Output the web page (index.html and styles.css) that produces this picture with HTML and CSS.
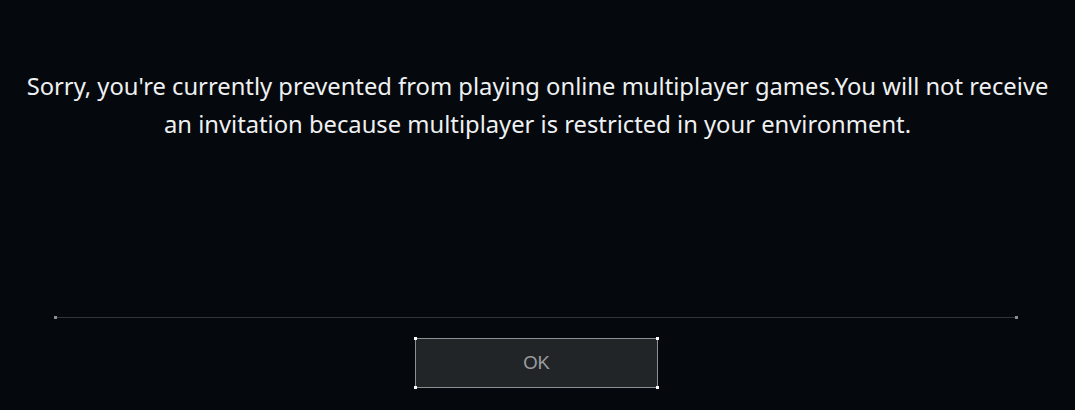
FILE: index.html
```html
<!DOCTYPE html>
<html>
<head>
<meta charset="utf-8">
<link rel="stylesheet" href="styles.css">
</head>
<body>
<div class="dialog">
  <p class="message">Sorry, you're currently prevented from playing online multiplayer games.You will not receive an invitation because multiplayer is restricted in your environment.</p>
  <div class="divider"><span class="cap left"></span><span class="cap right"></span></div>
  <div class="actions">
    <button class="btn"><span class="dot tl"></span><span class="dot tr"></span><span class="dot bl"></span><span class="dot br"></span>OK</button>
  </div>
</div>
</body>
</html>
```
FILE: styles.css
```css
html, body {
  margin: 0;
  padding: 0;
  background: #05080c;
  width: 1075px;
  height: 410px;
  overflow: hidden;
}
.dialog {
  display: flex;
  flex-direction: column;
  align-items: center;
  padding-top: 67px;
}
.message {
  margin: 0;
  width: 1032px;
  text-align: center;
  font-family: "Noto Sans", sans-serif;
  font-size: 23.75px;
  line-height: 38px;
  color: #eef0f2;
}
.divider {
  position: relative;
  margin-top: 174px;
  margin-left: -3px;
  width: 962px;
  height: 1px;
  background: #30363b;
}
.cap {
  position: absolute;
  top: -1px;
  width: 3px;
  height: 3px;
  background: #8a8d90;
}
.cap.left { left: -1px; }
.cap.right { right: -1px; }
.actions {
  margin-top: 20px;
  display: flex;
  justify-content: center;
}
.btn {
  position: relative;
  width: 243px;
  height: 50px;
  margin-left: -2px;
  background: #212528;
  border: 1px solid #8c9094;
  color: #9a9c9e;
  font-family: "Liberation Sans", Arial, sans-serif;
  font-size: 18.5px;
  padding: 0;
}
.dot {
  position: absolute;
  width: 3px;
  height: 3px;
  background: #ffffff;
}
.dot.tl { left: -2px; top: -2px; }
.dot.tr { right: -2px; top: -2px; }
.dot.bl { left: -2px; bottom: -2px; }
.dot.br { right: -2px; bottom: -2px; }
```
